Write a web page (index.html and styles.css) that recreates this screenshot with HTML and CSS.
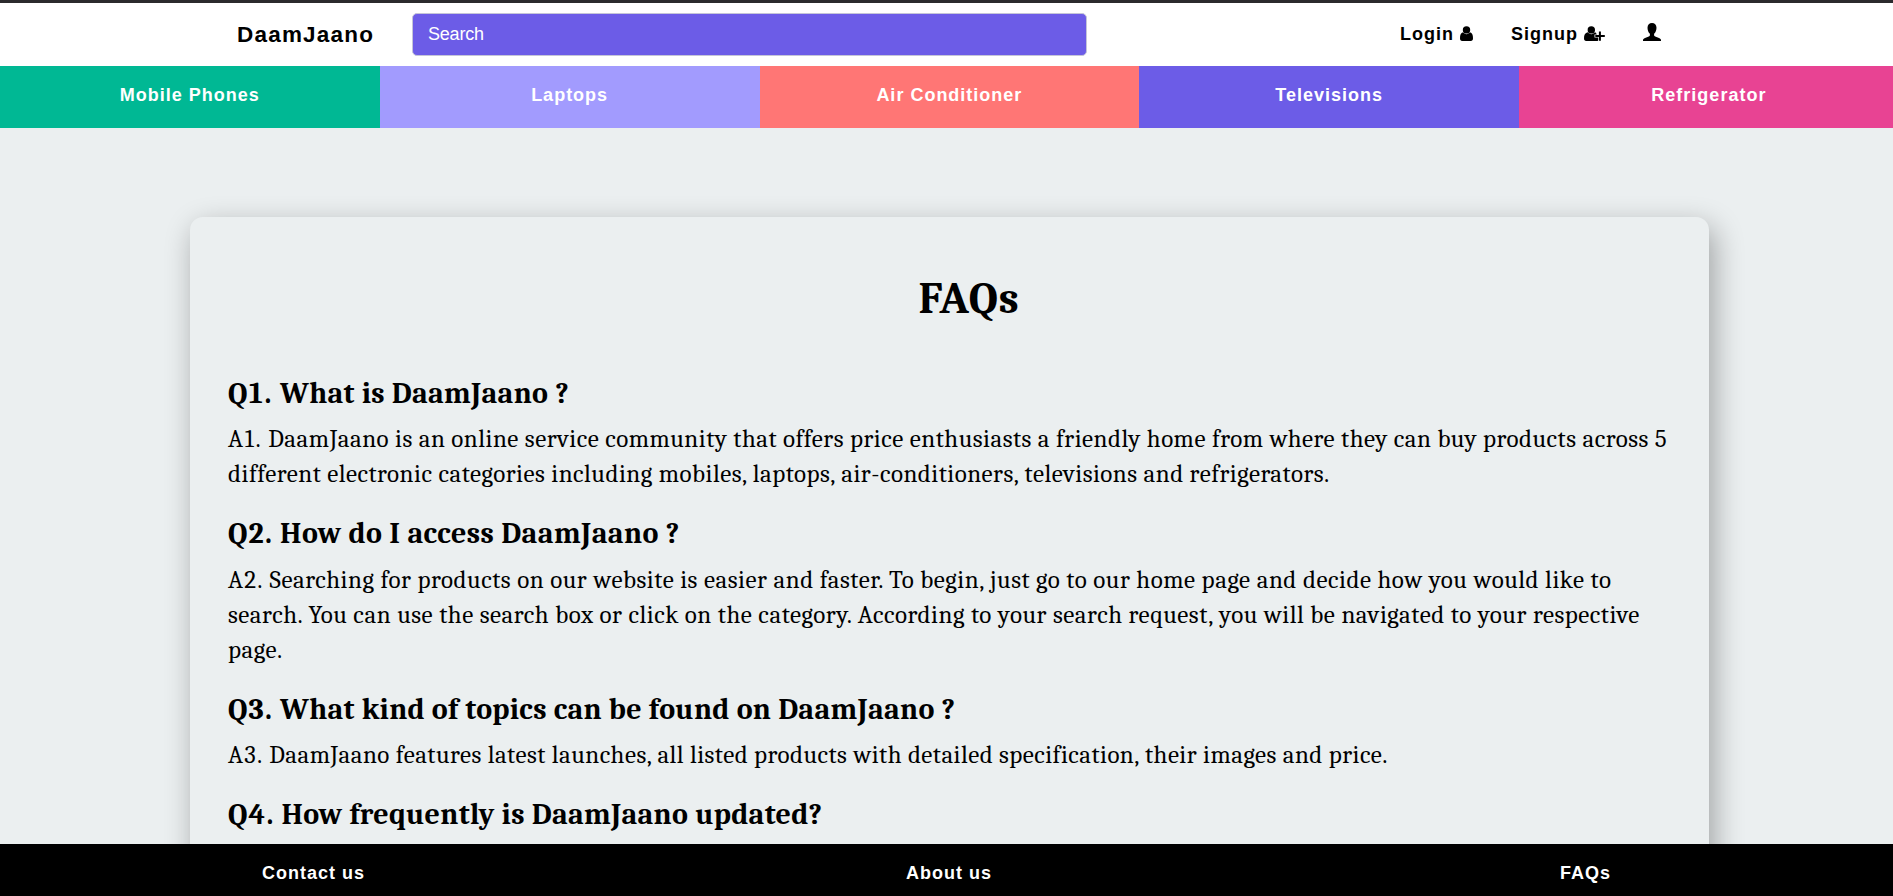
FILE: index.html
```html
<!DOCTYPE html>
<html lang="en">
<head>
<meta charset="utf-8">
<title>DaamJaano - FAQs</title>
<link rel="stylesheet" href="styles.css">
</head>
<body>
<div class="page">
  <header class="navbar">
    <a class="brand">DaamJaano</a>
    <input class="search" type="text" placeholder="Search" aria-label="Search">
    <nav class="account">
      <a class="account-link login">Login
        <svg class="icon icon-user" viewBox="0 0 13 15"><circle cx="6.5" cy="3.9" r="3.7"/><path d="M3 6.3C.8 6.8 0 9 0 12.3 0 14 .8 15 2.2 15h8.6c1.4 0 2.2-1 2.2-2.7 0-3.3-.8-5.5-3-6C9 7.400 7.900 8.200 6.500 8.200S4 7.400 3 6.300z"/></svg>
      </a>
      <a class="account-link signup">Signup
        <svg class="icon icon-plus" viewBox="0 0 21 15"><circle cx="7.300" cy="3.900" r="3.700"/><path d="M3.800 6.300C1 6.800 0 9 0 12.300 0 14 .8 15 2.200 15h10.600c.6 0 1.100-.2 1.400-.6v-2.900h-3.700V8.600h2.300c-.4-1.300-1-2-2-2.300-.9 1.100-2 1.900-3.500 1.900s-2.600-.8-3.500-1.900z"/><path d="M14.900 5.600h2v3.500h3.900v1.800h-3.900v3.900h-2v-3.900h-3.600V9.100h3.600z"/></svg>
      </a>
      <a class="account-link profile" aria-label="Profile">
        <svg class="icon icon-profile" viewBox="0 0 18 18"><path d="M9 0C6.300 0 4.500 1.800 4.500 4.800c0 2.600 1 4.800 2.400 6v1.400c0 .7-.4 1.100-1.100 1.400L2 15c-1.300.6-2 1.200-2 2.200V18h18v-.8c0-1-.7-1.600-2-2.200l-3.800-1.400c-.7-.3-1.100-.7-1.100-1.400v-1.400c1.400-1.200 2.400-3.400 2.400-6C13.500 1.800 11.700 0 9 0z"/></svg>
      </a>
    </nav>
  </header>
  <nav class="categories">
    <a class="category mobiles">Mobile Phones</a>
    <a class="category laptops">Laptops</a>
    <a class="category conditioners">Air Conditioner</a>
    <a class="category televisions">Televisions</a>
    <a class="category refrigerators">Refrigerator</a>
  </nav>
  <main class="content">
    <section class="card">
      <h1 class="title">FAQs</h1>
      <h2 class="question first"><span class="label label-one">Q1.</span> What is DaamJaano ?</h2>
      <p class="answer"><span class="label label-one">A1.</span> DaamJaano is an online service community that offers price enthusiasts a friendly home from where they can buy products across 5<br>different electronic categories including mobiles, laptops, air-conditioners, televisions and refrigerators.</p>
      <h2 class="question second"><span class="label">Q2.</span> How do I access DaamJaano ?</h2>
      <p class="answer spaced"><span class="label">A2.</span> Searching for products on our website is easier and faster. To begin, just go to our home page and decide how you would like to<br>search. You can use the search box or click on the category. According to your search request, you will be navigated to your respective<br>page.</p>
      <h2 class="question long"><span class="label">Q3.</span> What kind of topics can be found on DaamJaano ?</h2>
      <p class="answer third"><span class="label">A3.</span> DaamJaano features latest launches, all listed products with detailed specification, their images and price.</p>
      <h2 class="question long"><span class="label">Q4.</span> How frequently is DaamJaano updated?</h2>
    </section>
  </main>
  <footer class="footer">
    <a class="contact">Contact us</a>
    <a class="about">About us</a>
    <a class="faqs">FAQs</a>
  </footer>
</div>
</body>
</html>
```
FILE: styles.css
```css
* { box-sizing: border-box; }

body {
  margin: 0;
  background: #ebeff0;
  color: #000;
  font-family: "Liberation Sans", Arial, sans-serif;
  overflow: hidden;
}

.page {
  display: flex;
  flex-direction: column;
  height: 896px;
  overflow: hidden;
}

.navbar {
  display: flex;
  align-items: center;
  flex: none;
  height: 66px;
  padding: 0 232px 0 237px;
  border-top: 3px solid #2b2a2d;
  background: #fff;
}

.brand {
  width: 175px;
  font-size: 22.5px;
  font-weight: 600;
  letter-spacing: 1.2px;
}

.search {
  width: 675px;
  height: 43px;
  padding: 0 15px 1px;
  border: 1px solid #c5c5d8;
  border-radius: 5px;
  background: #6c5ce7;
  font: 18px "Liberation Sans", Arial, sans-serif;
  letter-spacing: -0.2px;
}

.search::placeholder { color: #fff; opacity: 1; }

.account {
  display: flex;
  margin: 0 0 1px auto;
  align-items: center;
  gap: 38px;
}

.account-link {
  display: flex;
  align-items: center;
  gap: 6px;
  font-size: 18px;
  font-weight: 700;
  letter-spacing: 1px;
}

.icon { display: block; fill: #000; }
.icon-user { width: 13px; height: 15px; margin-top: -2px; }
.icon-plus { width: 21px; height: 15px; margin-top: -2px; }
.icon-profile { width: 18px; height: 18px; margin-top: -4px; }

.categories {
  display: grid;
  grid-template-columns: repeat(5, 379.75px);
  flex: none;
  height: 62px;
}

.category {
  padding-top: 19px;
  color: #fff;
  font-size: 18px;
  font-weight: 700;
  line-height: 21px;
  letter-spacing: 1px;
  text-align: center;
}

.mobiles { background: #00b894; }
.laptops { background: #a29bfe; }
.conditioners { background: #ff7675; }
.televisions { background: #6c5ce7; }
.refrigerators { background: #e84393; }

.content {
  flex: 1;
  min-height: 0;
  padding: 89px 184px 0 190px;
  overflow: hidden;
}

.card {
  height: 1000px;
  padding: 46px 0 0 38px;
  border-radius: 13px;
  box-shadow: 5px 10px 30px rgba(0, 0, 0, 0.33);
  font-family: Cambria, Caladea, "Liberation Serif", serif;
}

.title {
  margin: 0 0 41px;
  padding-left: 1px;
  font-size: 45px;
  line-height: 70px;
  letter-spacing: 0.8px;
  text-align: center;
}

.question {
  margin: 0 0 7px;
  font-size: 30px;
  line-height: 40px;
}

.first { letter-spacing: 0.3px; }
.second { margin-bottom: 8px; letter-spacing: 0.4px; }
.long { letter-spacing: 0.3px; }

.label { letter-spacing: 1.2px; }
.label-one { letter-spacing: 1.7px; }

.answer {
  margin: 0 0 23px;
  font-size: 25px;
  line-height: 35px;
  letter-spacing: 0.48px;
  white-space: nowrap;
}

.spaced { letter-spacing: 0.51px; }
.third { letter-spacing: 0.45px; }

.footer {
  display: grid;
  grid-template-columns: 644px 654px auto;
  flex: none;
  height: 52px;
  padding: 19px 0 0 262px;
  background: #000;
  color: #fff;
  font-size: 18px;
  font-weight: 700;
  line-height: 21px;
  letter-spacing: 1px;
}
```
